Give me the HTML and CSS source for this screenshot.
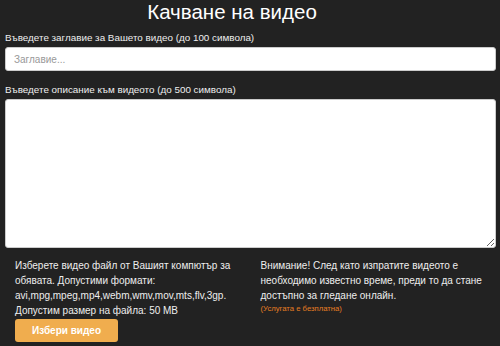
FILE: index.html
```html
<!DOCTYPE html>
<html lang="bg">
<head>
    <meta charset="UTF-8">
    <meta name="viewport" content="width=device-width, initial-scale=1.0">
    <title>Качване на видео</title>
    <link rel="stylesheet" href="styles.css">
</head>
<body>
    <main class="upload">
        <h1>Качване на видео</h1>
        <label class="field-label" for="title">Въведете заглавие за Вашето видео (до 100 символа)</label>
        <input type="text" id="title" class="field-input" placeholder="Заглавие...">
        <label class="field-label" for="desc">Въведете описание към видеото (до 500 символа)</label>
        <textarea id="desc" class="field-area"></textarea>

        <div class="info">
            <div class="info-col">
                <p>Изберете видео файл от Вашият компютър за обявата. Допустими формати: avi,mpg,mpeg,mp4,webm,wmv,mov,mts,flv,3gp. Допустим размер на файла: 50 MB</p>
                <button class="btn-choose">Избери видео</button>
            </div>
            <div class="info-col">
                <p>Внимание! След като изпратите видеото е необходимо известно време, преди то да стане достъпно за гледане онлайн.</p>
                <p class="note">(Услугата е безплатна)</p>
            </div>
        </div>
    </main>
</body>
</html>
```

FILE: styles.css
```css
body {
    margin: 0;
    background-color: #222;
    color: #fff;
    font-family: "Liberation Sans", Arial, sans-serif;
}
.upload {
    padding: 0 4px 0 5px;
}
h1 {
    margin: 0 0 7px;
    padding-right: 37px;
    font-size: 20.5px;
    font-weight: normal;
    line-height: 24px;
    text-align: center;
}
.field-label {
    display: block;
    font-size: 9.85px;
    line-height: 13px;
    margin: 0 0 3px;
    color: #eee;
}
.field-input {
    display: block;
    box-sizing: border-box;
    width: 100%;
    height: 24px;
    margin: 0 0 12px;
    padding: 0 8px;
    border: 1px solid #ccc;
    border-radius: 3px;
    font-family: inherit;
    font-size: 10px;
    color: #555;
}
.field-input::placeholder {
    color: #999;
}
.field-area {
    display: block;
    box-sizing: border-box;
    width: 100%;
    height: 149px;
    border: 1px solid #ccc;
    border-radius: 3px;
    margin: 0;
}
.info {
    display: grid;
    grid-template-columns: 1fr 1fr;
    padding-top: 10px;
}
.info-col {
    padding: 0 10px;
}
.info-col p {
    margin: 0;
    font-size: 10px;
    line-height: 15px;
    color: #eee;
}
.info-col .note {
    font-size: 7.7px;
    line-height: 12px;
    color: #e67e22;
}
.btn-choose {
    display: block;
    margin-top: 1px;
    width: 103px;
    height: 23px;
    border: 0;
    border-radius: 3px;
    background-color: #f0ad4e;
    color: #fff;
    font-family: inherit;
    font-size: 10px;
    font-weight: bold;
}
```
